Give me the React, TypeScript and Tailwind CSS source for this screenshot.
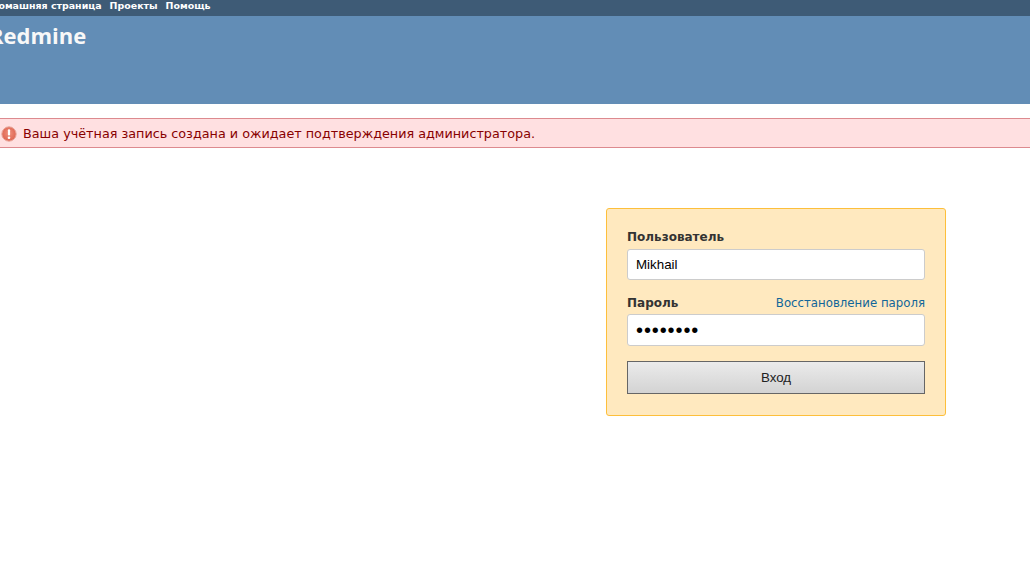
export default function App() {
  return (
    <div className="h-[571px] w-[1030px] overflow-hidden bg-white font-['DejaVu_Sans',sans-serif]">
      {/* Верхнее меню */}
      <div className="flex h-4 items-center gap-2 bg-[#3e5b76] pb-[3px] text-[9.45px] font-bold text-white">
        <a className="-ml-[10px]">Домашняя страница</a>
        <a>Проекты</a>
        <a>Помощь</a>
      </div>

      {/* Шапка */}
      <div className="h-[88px] bg-[#628db6] pt-[4px]">
        <h1 className="-ml-[11px] font-['Open_Sans',sans-serif] text-[22px] leading-[30px] font-bold text-[#f8f8f8]">Redmine</h1>
      </div>

      {/* Сообщение */}
      <div className="mt-[14px] flex h-[30px] items-center border-y border-[#dd8a8f] bg-[#ffe0e1] pt-px text-[12.78px] text-[#880000]">
        <svg className="ml-[1px] h-[16px] w-[16px] shrink-0" viewBox="0 0 16 16">
          <defs>
            <radialGradient id="err" cx="50%" cy="45%" r="55%">
              <stop offset="0%" stopColor="#f0907c" />
              <stop offset="100%" stopColor="#dd6350" />
            </radialGradient>
          </defs>
          <circle cx="8" cy="8" r="7.2" fill="url(#err)" stroke="#e9a79b" />
          <rect x="6.9" y="3.2" width="2.2" height="6.4" rx="1" fill="#fff" />
          <circle cx="8" cy="11.8" r="1.3" fill="#fff" />
        </svg>
        <span className="ml-[6px]">Ваша учётная запись создана и ожидает подтверждения администратора.</span>
      </div>

      {/* Форма входа */}
      <div className="mt-[60px] ml-[606px] h-[208px] w-[340px] rounded-[3px] border border-[#fdbf3b] bg-[#ffe9bf] px-5 pt-[21px]">
        <label className="block text-[12px] leading-[15px] font-bold text-[#333]">Пользователь</label>
        <input
          readOnly
          value="Mikhail"
          className="mt-[4px] block h-[31px] w-[298px] rounded-[3px] border border-[#ccc] bg-white px-2 font-['Liberation_Sans',sans-serif] text-[13.33px] text-black outline-none"
        />
        <div className="mt-[16px] flex items-center justify-between">
          <label className="text-[12px] leading-[15px] font-bold text-[#333]">Пароль</label>
          <a className="text-[11.75px] leading-[15px] text-[#169]">Восстановление пароля</a>
        </div>
        <input
          readOnly
          type="password"
          value="12345678"
          className="mt-[3px] block h-[32px] w-[298px] rounded-[3px] border border-[#ccc] bg-white px-2 font-['Liberation_Sans',sans-serif] text-[20px] tracking-[0.9px] text-black outline-none"
        />
        <button className="mt-[15px] block h-[33px] w-[298px] border border-[#666] bg-gradient-to-b from-[#ebebeb] to-[#d3d3d3] font-['Liberation_Sans',sans-serif] text-[13.33px] text-[#222]">
          Вход
        </button>
      </div>
    </div>
  )
}
